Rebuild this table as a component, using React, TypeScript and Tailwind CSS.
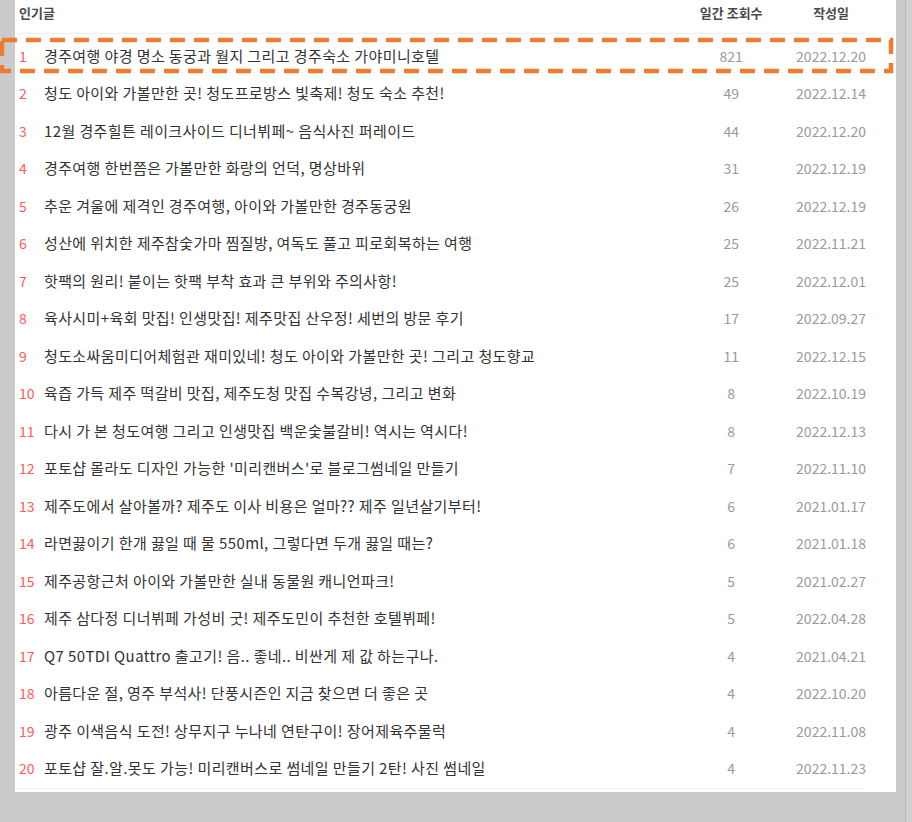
import React from "react";

const rows: [string, string, string][] = [
  ["경주여행 야경 명소 동궁과 월지 그리고 경주숙소 가야미니호텔", "821", "2022.12.20"],
  ["청도 아이와 가볼만한 곳! 청도프로방스 빛축제! 청도 숙소 추천!", "49", "2022.12.14"],
  ["12월 경주힐튼 레이크사이드 디너뷔페~ 음식사진 퍼레이드", "44", "2022.12.20"],
  ["경주여행 한번쯤은 가볼만한 화랑의 언덕, 명상바위", "31", "2022.12.19"],
  ["추운 겨울에 제격인 경주여행, 아이와 가볼만한 경주동궁원", "26", "2022.12.19"],
  ["성산에 위치한 제주참숯가마 찜질방, 여독도 풀고 피로회복하는 여행", "25", "2022.11.21"],
  ["핫팩의 원리! 붙이는 핫팩 부착 효과 큰 부위와 주의사항!", "25", "2022.12.01"],
  ["육사시미+육회 맛집! 인생맛집! 제주맛집 산우정! 세번의 방문 후기", "17", "2022.09.27"],
  ["청도소싸움미디어체험관 재미있네! 청도 아이와 가볼만한 곳! 그리고 청도향교", "11", "2022.12.15"],
  ["육즙 가득 제주 떡갈비 맛집, 제주도청 맛집 수복강녕, 그리고 변화", "8", "2022.10.19"],
  ["다시 가 본 청도여행 그리고 인생맛집 백운숯불갈비! 역시는 역시다!", "8", "2022.12.13"],
  ["포토샵 몰라도 디자인 가능한 '미리캔버스'로 블로그썸네일 만들기", "7", "2022.11.10"],
  ["제주도에서 살아볼까? 제주도 이사 비용은 얼마?? 제주 일년살기부터!", "6", "2021.01.17"],
  ["라면끓이기 한개 끓일 때 물 550ml, 그렇다면 두개 끓일 때는?", "6", "2021.01.18"],
  ["제주공항근처 아이와 가볼만한 실내 동물원 캐니언파크!", "5", "2021.02.27"],
  ["제주 삼다정 디너뷔페 가성비 굿! 제주도민이 추천한 호텔뷔페!", "5", "2022.04.28"],
  ["Q7 50TDI Quattro 출고기! 음.. 좋네.. 비싼게 제 값 하는구나.", "4", "2021.04.21"],
  ["아름다운 절, 영주 부석사! 단풍시즌인 지금 찾으면 더 좋은 곳", "4", "2022.10.20"],
  ["광주 이색음식 도전! 상무지구 누나네 연탄구이! 장어제육주물럭", "4", "2022.11.08"],
  ["포토샵 잘.알.못도 가능! 미리캔버스로 썸네일 만들기 2탄! 사진 썸네일", "4", "2022.11.23"],
];

const font = {
  fontFamily: '"Noto Sans CJK KR", "Noto Sans", sans-serif',
};

export default function App() {
  return (
    <div
      className="relative flex h-[822px] w-[912px] overflow-hidden bg-[#cbcbcb]"
      style={font}
    >
      <div className="w-[905px] pl-[15px] pt-[15px]">
        <div className="h-[792px] w-[881px] bg-white pl-[3px]">
          <div className="-mt-[15px] flex h-[33px] pt-[4px] text-[13px] font-semibold leading-[18px] text-[#4a4a4a]">
            <div className="w-[679px] pl-[1px]">인기글</div>
            <div className="w-[70px] text-center">일간 조회수</div>
            <div className="w-[130px] text-center">작성일</div>
          </div>
          <div className="h-px w-[846px] bg-[#efefef]" />
          <div className="mt-[3px] flex flex-col">
            {rows.map(([title, views, date], i) => (
              <div key={i} className="flex h-[37.5px] items-center text-[14px] leading-[20px]">
                <div className="w-[26px] pl-[1px] text-[#ff5a5a]">{i + 1}</div>
                <div className="w-[653px] whitespace-nowrap text-[15px] tracking-[0.4px] text-[#333]">
                  {title}
                </div>
                <div className="w-[70px] text-center text-[#9a9a9a]">{views}</div>
                <div className="w-[130px] text-center text-[#9a9a9a]">{date}</div>
              </div>
            ))}
          </div>
          <div className="mt-[1px] h-px w-[846px] bg-[#efefef]" />
        </div>
      </div>
      <div className="h-full w-px bg-[#b9b9b9]" />
      <div className="h-full flex-1 bg-[#d0d0d0]" />
      <svg
        className="pointer-events-none absolute left-0 top-0"
        width="912"
        height="822"
      >
        <rect
          x="2"
          y="40"
          width="889"
          height="31"
          fill="none"
          stroke="#ed7d31"
          strokeWidth="4.5"
          strokeDasharray="15 9"
        />
      </svg>
    </div>
  );
}
